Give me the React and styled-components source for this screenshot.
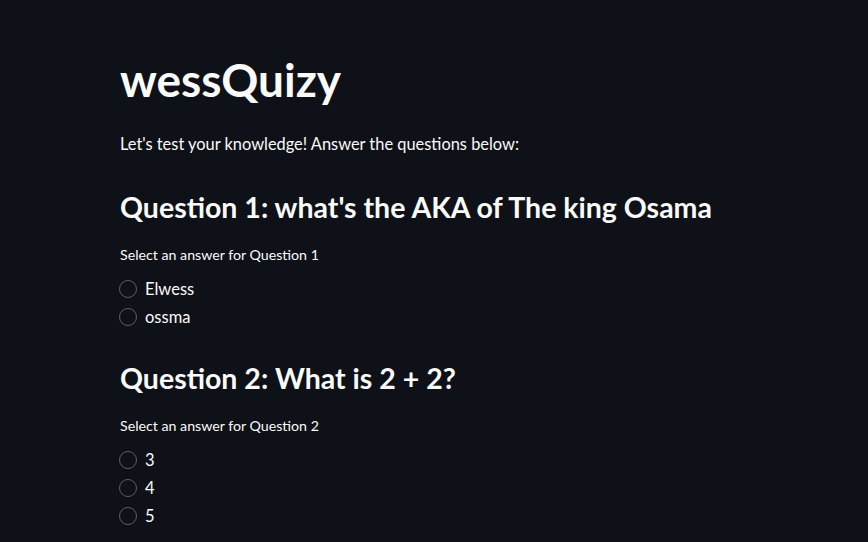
import styled, { createGlobalStyle } from "styled-components";

const GlobalStyle = createGlobalStyle`
  html, body {
    margin: 0;
    padding: 0;
    background: #0e1117;
  }
  body {
    font-family: "Lato", "Noto Sans", sans-serif;
    color: #fafafa;
  }
`;

const Main = styled.main`
  min-height: 542px;
  padding: 54px 120px 0;
  box-sizing: border-box;
`;

const Title = styled.h1`
  margin: 0 0 26px;
  font-size: 46px;
  line-height: 52px;
  font-weight: 700;
`;

const Intro = styled.p`
  margin: 0 0 33px;
  font-size: 16.4px;
  line-height: 24px;
`;

const Section = styled.section`
  margin-bottom: 29px;
`;

const Question = styled.h3`
  margin: 0 0 20px;
  font-size: 28.5px;
  line-height: 36px;
  font-weight: 700;
`;

const Label = styled.div`
  margin-bottom: 10px;
  font-size: 14.2px;
  line-height: 20px;
`;

const Options = styled.div`
  display: flex;
  flex-direction: column;
`;

const Option = styled.label`
  display: flex;
  align-items: center;
  gap: 8px;
  height: 28px;
  font-size: 16.5px;
  cursor: pointer;
`;

const Circle = styled.span`
  width: 18px;
  height: 18px;
  margin-left: -1px;
  border-radius: 50%;
  border: 1.5px solid #5b5e66;
  box-sizing: border-box;
  flex-shrink: 0;
`;

const questions = [
  {
    title: "Question 1: what's the AKA of The king Osama",
    label: "Select an answer for Question 1",
    options: ["Elwess", "ossma"],
  },
  {
    title: "Question 2: What is 2 + 2?",
    label: "Select an answer for Question 2",
    options: ["3", "4", "5"],
  },
];

const App = () => {
  return (
    <>
      <GlobalStyle />
      <Main>
        <Title>wessQuizy</Title>
        <Intro>Let's test your knowledge! Answer the questions below:</Intro>
        {questions.map((q) => (
          <Section key={q.title}>
            <Question>{q.title}</Question>
            <Label>{q.label}</Label>
            <Options>
              {q.options.map((o) => (
                <Option key={o}>
                  <Circle />
                  {o}
                </Option>
              ))}
            </Options>
          </Section>
        ))}
      </Main>
    </>
  );
};

export default App;
